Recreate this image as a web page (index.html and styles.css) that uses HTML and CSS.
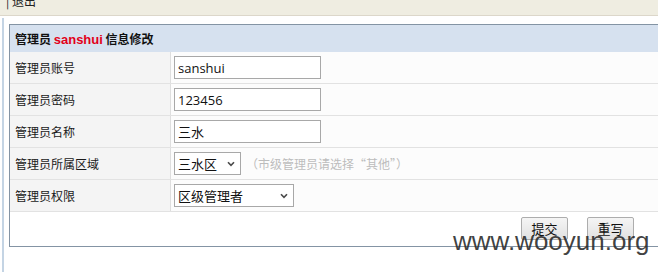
FILE: index.html
```html
<!DOCTYPE html>
<html lang="zh-CN">
<head>
<meta charset="utf-8">
<title>管理员信息修改</title>
<link rel="stylesheet" href="styles.css">
</head>
<body>
<div class="topbar"><span class="toplink">| 退出</span></div>
<div class="frame">
  <form class="panel">
    <div class="panel-head">管理员 <span class="name">sanshui</span> 信息修改</div>
    <div class="row">
      <div class="label">管理员账号</div>
      <div class="value"><input class="text" type="text" value="sanshui"></div>
    </div>
    <div class="row">
      <div class="label">管理员密码</div>
      <div class="value"><input class="text" type="text" value="123456"></div>
    </div>
    <div class="row">
      <div class="label">管理员名称</div>
      <div class="value"><input class="text" type="text" value="三水"></div>
    </div>
    <div class="row">
      <div class="label">管理员所属区域</div>
      <div class="value">
        <span class="sel sel-area">
          <select><option>三水区</option></select>
          <svg class="chev" width="8" height="6" viewBox="0 0 8 6"><path d="M1 1.2 L4 4.4 L7 1.2" fill="none" stroke="#4a4a4a" stroke-width="1.6"/></svg>
        </span>
        <span class="hint">（市级管理员请选择“其他”）</span>
      </div>
    </div>
    <div class="row">
      <div class="label">管理员权限</div>
      <div class="value">
        <span class="sel sel-role">
          <select><option>区级管理者</option></select>
          <svg class="chev" width="8" height="6" viewBox="0 0 8 6"><path d="M1 1.2 L4 4.4 L7 1.2" fill="none" stroke="#4a4a4a" stroke-width="1.6"/></svg>
        </span>
      </div>
    </div>
    <div class="actions">
      <button type="button" class="btn">提交</button>
      <button type="button" class="btn">重写</button>
    </div>
  </form>
</div>
<div class="watermark">www.wooyun.org</div>
</body>
</html>
```
FILE: styles.css
```css
html, body {
  margin: 0;
  padding: 0;
  height: 100%;
  overflow: hidden;
  background: #ffffff;
  font-family: "Noto Sans CJK SC", "Noto Sans", sans-serif;
  font-size: 12px;
  color: #000;
}

.topbar {
  height: 15px;
  background: #efede1;
  border-bottom: 1px solid #dcd7ca;
  overflow: hidden;
}

.toplink {
  display: block;
  margin-top: -7px;
  padding-left: 6px;
  line-height: 16px;
  color: #222;
  font-size: 12px;
}

.frame {
  margin-top: 2px;
  margin-left: 2px;
  border-left: 2px solid #c4d4e4;
  padding: 6px 0 0 5px;
  height: 260px;
  overflow: hidden;
}

.panel {
  width: 720px;
  margin: 0;
  border: 1px solid #8494a4;
  border-right: none;
  background: #fff;
}

.panel-head {
  height: 27px;
  line-height: 27px;
  background: #d6e1ef;
  padding-left: 5px;
  font-weight: bold;
  font-size: 12px;
  color: #111;
}

.panel-head .name {
  color: #e2001a;
  font-family: "Liberation Sans", "Noto Sans", sans-serif;
  font-size: 13px;
}

.row {
  display: grid;
  grid-template-columns: 161px 1fr;
  height: 32px;
  box-sizing: border-box;
  border-bottom: 1px solid #e2e2e2;
}

.label {
  display: flex;
  align-items: center;
  padding-left: 5px;
  background: #f4f4f4;
  border-right: 1px solid #dedede;
  color: #1a1a1a;
}

.value {
  display: flex;
  align-items: center;
  padding-left: 3px;
  background: #fcfcfc;
}

.text {
  box-sizing: border-box;
  width: 147px;
  height: 23px;
  margin: 0;
  padding: 0 0 0 3px;
  border: 1px solid #a8a8a8;
  background: #fff;
  font-family: "Open Sans", "Noto Sans CJK SC", sans-serif;
  font-size: 13px;
  color: #111;
  outline: none;
}

.sel {
  position: relative;
  display: inline-flex;
}

.sel select {
  appearance: none;
  -webkit-appearance: none;
  box-sizing: border-box;
  height: 23px;
  margin: 0;
  padding: 0 0 0 3px;
  border: 1px solid #a8a8a8;
  border-radius: 0;
  background: #fff;
  font-family: "Noto Sans CJK SC", sans-serif;
  font-size: 13px;
  color: #111;
}

.sel-area select { width: 67px; }
.sel-role select { width: 120px; }

.chev {
  position: absolute;
  top: 9px;
  right: 6px;
  pointer-events: none;
}

.hint {
  margin-left: 5px;
  color: #bcbcbc;
  font-size: 12px;
}

.actions {
  display: flex;
  gap: 19px;
  height: 34px;
  box-sizing: border-box;
  padding: 5px 0 0 511px;
}

.btn {
  box-sizing: border-box;
  width: 47px;
  height: 23px;
  margin: 0;
  padding: 0;
  border: 1px solid #adadad;
  border-radius: 2px;
  background: linear-gradient(#f5f5f5, #e1e1e1);
  font-family: "Noto Sans CJK SC", sans-serif;
  font-size: 13px;
  line-height: 21px;
  color: #111;
}

.watermark {
  position: absolute;
  left: 453px;
  top: 228px;
  font-family: "Liberation Sans", Arial, sans-serif;
  font-size: 26px;
  line-height: 26px;
  color: rgba(40, 40, 40, 0.88);
  pointer-events: none;
}
```
